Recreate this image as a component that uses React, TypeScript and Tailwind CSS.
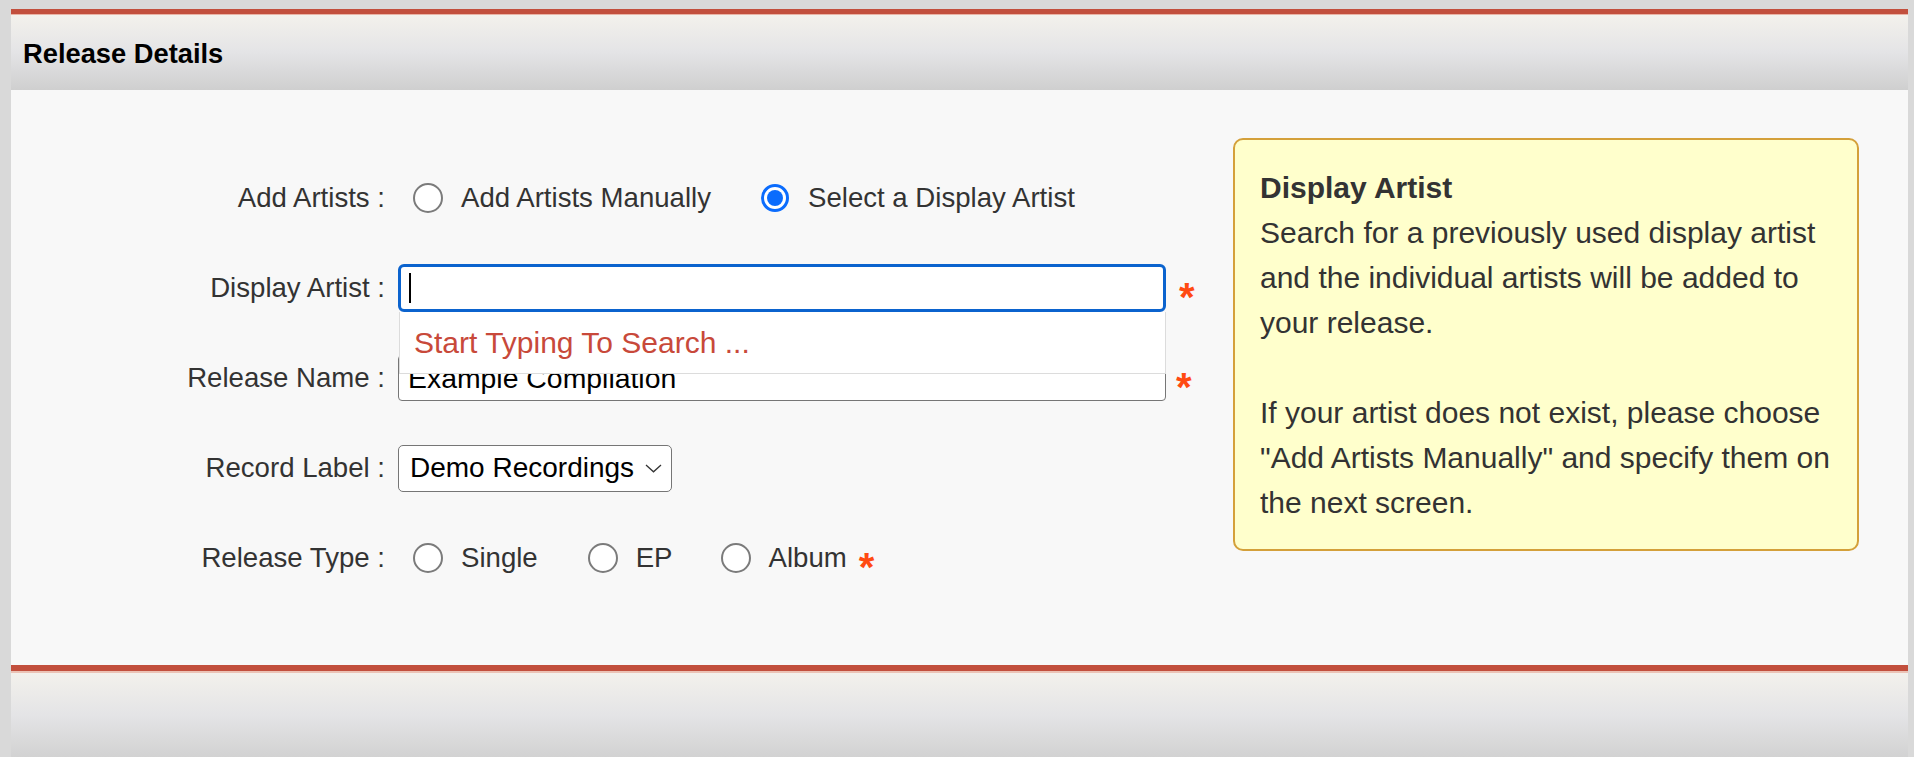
import React from "react";

function Radio({ checked }: { checked?: boolean }) {
  return (
    <span className="w-[30px] h-[30px] flex items-center justify-center shrink-0">
      {checked ? (
        <span className="w-[28px] h-[28px] rounded-full border-[3px] border-[#0b6cfd] bg-white flex items-center justify-center">
          <span className="w-[16px] h-[16px] rounded-full bg-[#0b6cfd]" />
        </span>
      ) : (
        <span className="w-[30px] h-[30px] rounded-full border-2 border-[#7b7b7b] bg-white" />
      )}
    </span>
  );
}

function Option({ label, checked }: { label: string; checked?: boolean }) {
  return (
    <span className="flex items-center gap-[18px]">
      <Radio checked={checked} />
      <span className="text-[#333] whitespace-nowrap">{label}</span>
    </span>
  );
}

function Star() {
  return (
    <span className="inline-block text-[40px] font-bold leading-none text-[#ff4a12] translate-y-[12px]">*</span>
  );
}

function Row({ label, children }: { label: string; children: React.ReactNode }) {
  return (
    <div className="flex h-[90px] items-center">
      <div className="w-[374px] text-right text-[#333] whitespace-nowrap">{label}</div>
      <div className="ml-[13px] flex items-center">{children}</div>
    </div>
  );
}

export default function App() {
  return (
    <div className="w-[1914px] h-[757px] overflow-hidden bg-[#d9d9d9] pt-[9px] pl-[11px] pr-[6px] font-['Liberation_Sans',Arial,sans-serif] text-[27.6px]">
      <div className="h-[748px] bg-[#f8f8f8] flex flex-col">
        {/* Header */}
        <div className="h-[5px] bg-[#c24f3d]" />
        <div className="h-[1px] bg-[#e9b3a5]" />
        <div className="h-[75px] bg-linear-to-b from-[#f3f1ec] via-[#e4e4e6] to-[#cfcfcf] flex items-center pl-[12px] pt-[4px]">
          <span className="font-bold text-black text-[27.3px]">Release Details</span>
        </div>

        {/* Content */}
        <div className="h-[575px] flex">
          <div className="w-[1222px] pt-[63px]">
            <Row label="Add Artists :">
              <div className="ml-[15px] flex items-center gap-[49px]">
                <Option label="Add Artists Manually" />
                <Option label="Select a Display Artist" checked />
              </div>
            </Row>
            <Row label="Display Artist :">
              <div className="relative z-10 w-[768px] h-[48px]">
                <div className="w-full h-full bg-white border-[3px] border-[#0b63ce] rounded-[6px] flex items-center pl-[8px]">
                  <span className="w-[2px] h-[30px] bg-black" />
                </div>
                <div className="absolute left-[1px] top-full w-[767px] h-[62px] bg-white border border-t-0 border-[#dcdcdc] flex items-center pl-[14px] text-[30px] text-[#c8493a] whitespace-nowrap">
                  Start Typing To Search ...
                </div>
              </div>
              <span className="ml-[13px]">
                <Star />
              </span>
            </Row>
            <Row label="Release Name :">
              <div className="w-[768px] h-[46px] bg-white border border-[#767676] rounded-[4px] flex items-center pl-[9px] text-black text-[28.4px]">
                Example Compilation
              </div>
              <span className="ml-[10px]">
                <Star />
              </span>
            </Row>
            <Row label="Record Label :">
              <div className="w-[274px] h-[47px] bg-white border-[1.5px] border-[#767676] rounded-[5px] flex items-center pl-[11px] pr-[9px] justify-between text-black text-[28px]">
                <span className="whitespace-nowrap">Demo Recordings</span>
                <svg width="17" height="9" viewBox="0 0 17 9" fill="none">
                  <path d="M1 1L8.5 7.8L16 1" stroke="#333" strokeWidth="1.3" />
                </svg>
              </div>
            </Row>
            <Row label="Release Type :">
              <div className="ml-[15px] flex items-center">
                <Option label="Single" />
                <span className="ml-[50px]">
                  <Option label="EP" />
                </span>
                <span className="ml-[48px] flex items-center">
                  <Option label="Album" />
                  <span className="ml-[12px]">
                    <Star />
                  </span>
                </span>
              </div>
            </Row>
          </div>

          <div className="mt-[48px] w-[626px] h-[413px] bg-[#ffffcc] border-2 border-[#d4a03a] rounded-[10px] px-[25px] py-[25px] text-[#333] text-[30px] leading-[45px] whitespace-nowrap">
            <div className="font-bold">Display Artist</div>
            <div>Search for a previously used display artist</div>
            <div>and the individual artists will be added to</div>
            <div>your release.</div>
            <div className="h-[45px]" />
            <div>If your artist does not exist, please choose</div>
            <div>"Add Artists Manually" and specify them on</div>
            <div>the next screen.</div>
          </div>
        </div>

        {/* Footer */}
        <div className="h-[6px] bg-[#c24f3d]" />
        <div className="h-[2px] bg-[#ebc3b6]" />
        <div className="flex-1 bg-linear-to-b from-[#f3f1ec] via-[#e4e4e6] to-[#d2d2d2]" />
      </div>
    </div>
  );
}
